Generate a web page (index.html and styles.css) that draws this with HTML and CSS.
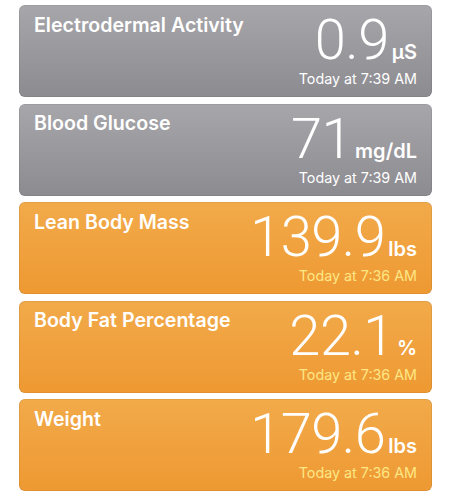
FILE: index.html
```html
<!DOCTYPE html>
<html>
<head>
<meta charset="utf-8">
<link rel="stylesheet" href="styles.css">
</head>
<body>
<div class="list">
  <div class="card grey">
    <div class="title">Electrodermal Activity</div>
    <div class="data">
      <div class="reading"><span class="num">0.9</span><span class="unit">µS</span></div>
      <div class="time">Today at 7:39 AM</div>
    </div>
  </div>
  <div class="card grey">
    <div class="title">Blood Glucose</div>
    <div class="data">
      <div class="reading"><span class="num">71</span><span class="unit">mg/dL</span></div>
      <div class="time">Today at 7:39 AM</div>
    </div>
  </div>
  <div class="card orange">
    <div class="title">Lean Body Mass</div>
    <div class="data">
      <div class="reading"><span class="num">139.9</span><span class="unit">lbs</span></div>
      <div class="time">Today at 7:36 AM</div>
    </div>
  </div>
  <div class="card orange">
    <div class="title">Body Fat Percentage</div>
    <div class="data">
      <div class="reading"><span class="num">22.1</span><span class="unit">%</span></div>
      <div class="time">Today at 7:36 AM</div>
    </div>
  </div>
  <div class="card orange">
    <div class="title">Weight</div>
    <div class="data">
      <div class="reading"><span class="num">179.6</span><span class="unit">lbs</span></div>
      <div class="time">Today at 7:36 AM</div>
    </div>
  </div>
</div>
</body>
</html>
```
FILE: styles.css
```css
html, body {
  margin: 0;
  padding: 0;
  background: #ffffff;
}
body {
  font-family: "Inter", "Roboto", sans-serif;
  color: #ffffff;
}
.list {
  display: flex;
  flex-direction: column;
  gap: 6.5px;
  padding: 5px 19px 0 19px;
}
.card {
  height: 92px;
  box-sizing: border-box;
  border-radius: 6px;
  padding: 0 15px 0 15px;
  display: flex;
  justify-content: space-between;
  align-items: flex-start;
  box-shadow: inset 0 0 0 0.6px rgba(0, 0, 0, 0.12);
}
.grey {
  background: linear-gradient(to bottom, #a7a6ab, #8c8b90);
}
.orange {
  background: linear-gradient(to bottom, #f2aa4a, #ee9932);
}
.title {
  font-size: 19.6px;
  font-weight: 600;
  line-height: 22px;
  margin-top: 8.5px;
}
.data {
  display: flex;
  flex-direction: column;
  align-items: flex-end;
}
.reading {
  display: flex;
  align-items: baseline;
  line-height: 1;
  margin-top: 7px;
}
.num {
  font-family: "Roboto", sans-serif;
  font-weight: 300;
  font-size: 56px;
  letter-spacing: -0.5px;
}
.unit {
  font-size: 20px;
  font-weight: 600;
  margin-left: 3px;
}
.time {
  font-size: 14.3px;
  line-height: 18px;
  margin-top: 2px;
}
.orange .time {
  color: #fee785;
}
```
